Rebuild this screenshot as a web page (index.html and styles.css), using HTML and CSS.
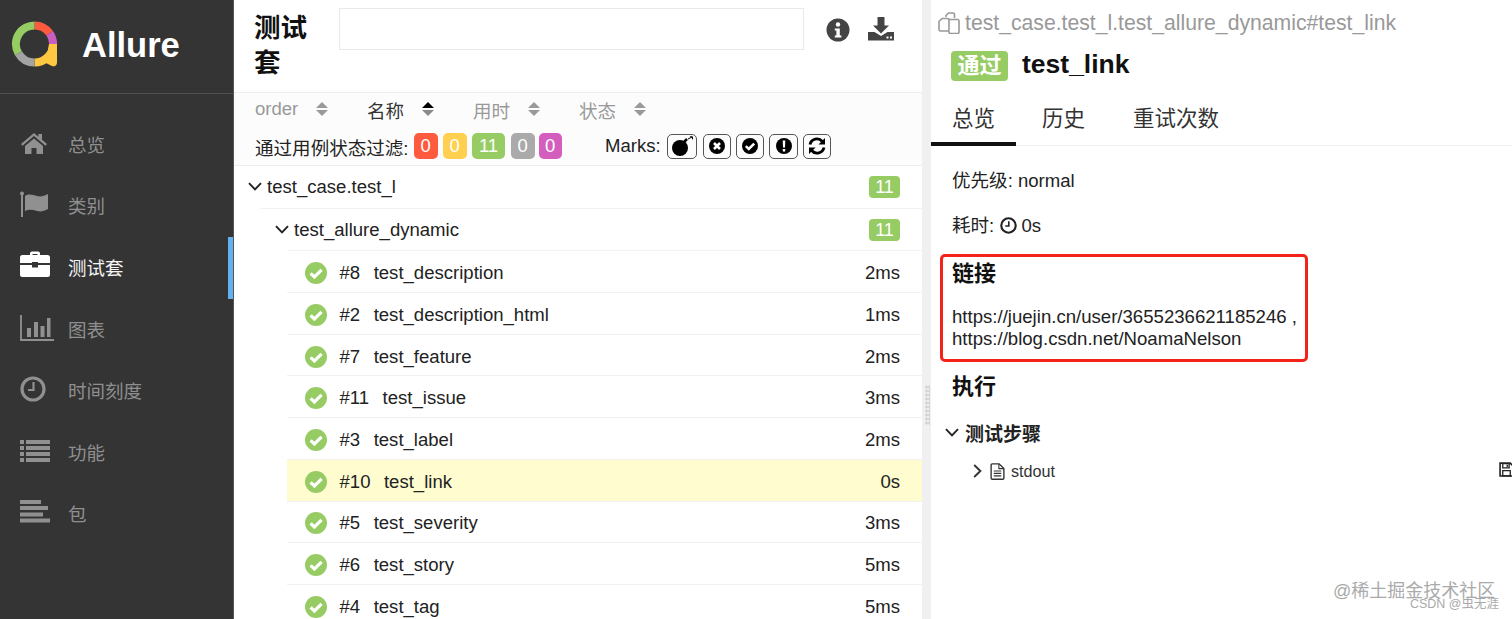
FILE: index.html
```html
<!DOCTYPE html>
<html lang="zh">
<head>
<meta charset="utf-8">
<title>Allure</title>
<link rel="stylesheet" href="styles.css">
</head>
<body>
<svg class="sprite" width="0" height="0" aria-hidden="true">
  <symbol id="chev-down" viewBox="0 0 14 9"><path d="M1 1.2 7 7.4 13 1.2" fill="none" stroke="currentColor" stroke-width="1.9"/></symbol>
  <symbol id="chev-right" viewBox="0 0 9 14"><path d="M1.2 1 7.4 7 1.2 13" fill="none" stroke="currentColor" stroke-width="1.9"/></symbol>
  <symbol id="sort" viewBox="0 0 12 16"><path d="M6 1 12 7H0Z" fill="#9a9a9a"/><path d="M6 15 12 9H0Z" fill="#9a9a9a"/></symbol>
  <symbol id="sort-on" viewBox="0 0 12 16"><path d="M6 1 12 7H0Z" fill="#000"/><path d="M6 15 12 9H0Z" fill="#8a8a8a"/></symbol>
  <symbol id="ok" viewBox="0 0 22 22"><circle cx="11" cy="11" r="11" fill="#97cc64"/><path d="M5.6 11.3 9.4 15 16.6 7.8" fill="none" stroke="#fff" stroke-width="3.2"/></symbol>
</svg>

<div class="app">
  <aside class="side">
    <div class="brand">
      <svg class="logo" width="50" height="50" viewBox="0 0 50 50" aria-hidden="true">
        <g fill="none" stroke-width="8">
          <path d="M24.5 5.4A18.6 18.6 0 0 1 39.7 13.3" stroke="#fd5a3e"/>
          <path d="M39.7 13.3A18.6 18.6 0 0 1 43.1 24" stroke="#c95fc0"/>
          <path d="M43.1 24A18.6 18.6 0 0 1 24.5 42.6" stroke="#ffc843"/>
          <path d="M24.5 42.6A18.6 18.6 0 0 1 8.4 33.3" stroke="#a3a3a3"/>
          <path d="M8.4 33.3A18.6 18.6 0 0 1 24.5 5.4" stroke="#97cc64"/>
        </g>
        <path d="M39 24h8v19a3.6 3.6 0 0 1-4.6 3.2L36 43Z" fill="#ffc843"/>
      </svg>
      <span class="brand-name">Allure</span>
    </div>
    <nav class="nav">
      <a class="nav-item">
        <svg class="nav-icon" width="28" height="24" viewBox="0 0 28 24"><path d="M14 2 1 13l1.5 1.7L14 5l11.5 9.7L27 13l-5-4.2V3h-3.6v2.8Z" fill="currentColor"/><path d="M5 15 14 7.4 23 15v8h-6.5v-6h-5v6H5Z" fill="currentColor"/></svg>
        <span>总览</span>
      </a>
      <a class="nav-item">
        <svg class="nav-icon" width="30" height="26" viewBox="0 0 30 26"><path d="M2 3v24" stroke="currentColor" stroke-width="2" fill="none"/><circle cx="2" cy="2.500" r="2" fill="currentColor"/><path d="M5 5c4-3 8-1 12 0s7 0 11-2v15c-4 2-7 3-11 2s-8-2-12 0Z" fill="currentColor"/></svg>
        <span>类别</span>
      </a>
      <a class="nav-item is-active">
        <svg class="nav-icon" width="30" height="26" viewBox="0 0 30 26"><path d="M10 4V2.500A2 2 0 0 1 12 .5h6a2 2 0 0 1 2 2V4h7.500A2.500 2.500 0 0 1 30 6.500V12H18v-1h-6v1H0V6.500A2.500 2.500 0 0 1 2.500 4ZM12.500 4h5V3h-5Z" fill="currentColor" fill-rule="evenodd"/><path d="M0 14h12v2.500h6V14h12v9.500a2.500 2.500 0 0 1-2.500 2.500h-25A2.500 2.500 0 0 1 0 23.500Z" fill="currentColor"/></svg>
        <span>测试套</span>
      </a>
      <a class="nav-item">
        <svg class="nav-icon" width="34" height="26" viewBox="0 0 34 26"><path d="M1 0v25h33" fill="none" stroke="currentColor" stroke-width="1.800"/><path d="M7 13h4v9H7ZM14 7h4v15h-4ZM20.500 11h4v11h-4ZM27 3h3.500v19H27Z" fill="currentColor"/></svg>
        <span>图表</span>
      </a>
      <a class="nav-item">
        <svg class="nav-icon" width="26" height="26" viewBox="0 0 26 26"><circle cx="13" cy="13" r="11" fill="none" stroke="currentColor" stroke-width="3.200"/><path d="M13.500 6v8H8" fill="none" stroke="currentColor" stroke-width="2.200"/></svg>
        <span>时间刻度</span>
      </a>
      <a class="nav-item">
        <svg class="nav-icon" width="30" height="24" viewBox="0 0 30 24"><path d="M0 1h4v4H0ZM6 1h24v4H6ZM0 7h4v4H0ZM6 7h24v4H6ZM0 13h4v4H0ZM6 13h24v4H6ZM0 19h4v4H0ZM6 19h24v4H6Z" fill="currentColor"/></svg>
        <span>功能</span>
      </a>
      <a class="nav-item">
        <svg class="nav-icon" width="30" height="24" viewBox="0 0 30 24"><path d="M0 0h21v4H0ZM0 6h28v4H0ZM0 12.500h23v4H0ZM0 18.500h30v4H0Z" fill="currentColor"/></svg>
        <span>包</span>
      </a>
    </nav>
  </aside>

  <main class="list">
    <header class="list-head">
      <h2 class="list-title">测试套</h2>
      <div class="search"></div>
      <svg class="tool-info" width="24" height="24" viewBox="0 0 24 24"><circle cx="12" cy="12" r="11.500" fill="#444"/><circle cx="12" cy="6.500" r="2.200" fill="#fff"/><path d="M8.800 10.500h5v7h1.600v2H8.800v-2h1.600v-5H8.800Z" fill="#fff"/></svg>
      <svg class="tool-dl" width="26" height="24" viewBox="0 0 26 24"><path d="M9.500 0h7v8.500h4.500L13 16.500 5 8.500h4.500Z" fill="#444"/><path d="M0 15h6.500l6.500 4 6.500-4H26v8.500H0Z" fill="#444"/><path d="M18.500 19.500h2v2h-2ZM22 19.500h2v2h-2Z" fill="#fff"/></svg>
    </header>
    <div class="controls">
      <div class="sorts">
        <span class="sort s-order">order<svg class="sort-ic" width="12" height="16"><use href="#sort"/></svg></span>
        <span class="sort s-name is-on">名称<svg class="sort-ic" width="12" height="16"><use href="#sort-on"/></svg></span>
        <span class="sort s-time">用时<svg class="sort-ic" width="12" height="16"><use href="#sort"/></svg></span>
        <span class="sort">状态<svg class="sort-ic" width="12" height="16"><use href="#sort"/></svg></span>
      </div>
      <div class="filters">
        <span class="filter-label">通过用例状态过滤:</span>
        <span class="chip c-red">0</span>
        <span class="chip c-yellow">0</span>
        <span class="chip c-green">11</span>
        <span class="chip c-gray">0</span>
        <span class="chip c-purple">0</span>
        <span class="marks-label">Marks:</span>
        <span class="mark m-wide"><svg width="24" height="20" viewBox="0 0 24 20"><circle cx="10" cy="12" r="8" fill="#000"/><path d="M14 6l3-3" stroke="#000" stroke-width="2.500"/><path d="M18 3l4-2M20 .8h2.500v2.500" stroke="#000" fill="none"/></svg></span>
        <span class="mark"><svg width="18" height="18" viewBox="0 0 18 18"><circle cx="9" cy="9" r="8" fill="#000"/><path d="M6 6l6 6M12 6l-6 6" stroke="#fff" stroke-width="2.600"/></svg></span>
        <span class="mark"><svg width="18" height="18" viewBox="0 0 18 18"><circle cx="9" cy="9" r="8" fill="#000"/><path d="M4.800 9.200 7.800 12l5.400-5.400" fill="none" stroke="#fff" stroke-width="2.500"/></svg></span>
        <span class="mark"><svg width="18" height="18" viewBox="0 0 18 18"><circle cx="9" cy="9" r="8" fill="#000"/><path d="M7.700 3.500h2.600L10 10.500H8ZM7.800 12h2.400v2.400H7.800Z" fill="#fff"/></svg></span>
        <span class="mark"><svg width="20" height="18" viewBox="0 0 20 18"><path d="M3 7.500A7 7 0 0 1 15.300 4.500" fill="none" stroke="#000" stroke-width="2.800"/><path d="M18 1v6.500h-6.500Z" fill="#000"/><path d="M17 10.500A7 7 0 0 1 4.700 13.500" fill="none" stroke="#000" stroke-width="2.800"/><path d="M2 17v-6.500h6.500Z" fill="#000"/></svg></span>
      </div>
    </div>
    <div class="tree">
      <div class="group g1">
        <svg class="chev" width="14" height="9"><use href="#chev-down"/></svg>
        <span class="group-name">test_case.test_l</span>
        <span class="count">11</span>
      </div>
      <div class="group g2">
        <svg class="chev" width="14" height="9"><use href="#chev-down"/></svg>
        <span class="group-name">test_allure_dynamic</span>
        <span class="count">11</span>
      </div>
      <div class="row"><svg class="ok" width="22" height="22"><use href="#ok"/></svg><span class="num">#8</span><span class="name">test_description</span><span class="dur">2ms</span></div>
      <div class="row"><svg class="ok" width="22" height="22"><use href="#ok"/></svg><span class="num">#2</span><span class="name">test_description_html</span><span class="dur">1ms</span></div>
      <div class="row"><svg class="ok" width="22" height="22"><use href="#ok"/></svg><span class="num">#7</span><span class="name">test_feature</span><span class="dur">2ms</span></div>
      <div class="row"><svg class="ok" width="22" height="22"><use href="#ok"/></svg><span class="num">#11</span><span class="name">test_issue</span><span class="dur">3ms</span></div>
      <div class="row"><svg class="ok" width="22" height="22"><use href="#ok"/></svg><span class="num">#3</span><span class="name">test_label</span><span class="dur">2ms</span></div>
      <div class="row is-current"><svg class="ok" width="22" height="22"><use href="#ok"/></svg><span class="num">#10</span><span class="name">test_link</span><span class="dur">0s</span></div>
      <div class="row"><svg class="ok" width="22" height="22"><use href="#ok"/></svg><span class="num">#5</span><span class="name">test_severity</span><span class="dur">3ms</span></div>
      <div class="row"><svg class="ok" width="22" height="22"><use href="#ok"/></svg><span class="num">#6</span><span class="name">test_story</span><span class="dur">5ms</span></div>
      <div class="row"><svg class="ok" width="22" height="22"><use href="#ok"/></svg><span class="num">#4</span><span class="name">test_tag</span><span class="dur">5ms</span></div>
    </div>
  </main>

  <div class="split"><span class="grip"></span></div>

  <section class="detail">
    <div class="path">
      <svg width="22" height="22" viewBox="0 0 22 22"><path d="M8 5V3.500L10.500 1H15a1.500 1.500 0 0 1 1.500 1.500V6M1 9.500 4 6.500H9.500A1.500 1.500 0 0 1 11 8V17.500A1.500 1.500 0 0 1 9.500 19h-7A1.500 1.500 0 0 1 1 17.500ZM11 7.500h9A1.200 1.200 0 0 1 21 8.700V20a1.500 1.500 0 0 1-1.500 1.500h-7A1.500 1.500 0 0 1 11 20v-1" fill="none" stroke="#999" stroke-width="1.600"/></svg>
      <span>test_case.test_l.test_allure_dynamic#test_link</span>
    </div>
    <div class="result">
      <span class="status">通过</span>
      <h1 class="result-name">test_link</h1>
    </div>
    <div class="tabs">
      <span class="tab is-on">总览</span>
      <span class="tab t2">历史</span>
      <span class="tab t3">重试次数</span>
    </div>
    <div class="body">
      <p class="meta">优先级: normal</p>
      <p class="meta">耗时: <svg class="clock" width="17" height="17" viewBox="0 0 16 16"><circle cx="8" cy="8" r="6.800" fill="none" stroke="#222" stroke-width="2"/><path d="M8.300 4v4.500H5" fill="none" stroke="#222" stroke-width="1.500"/></svg> 0s</p>
      <div class="links">
        <h3 class="h">链接</h3>
        <p class="link-text">https://juejin.cn/user/3655236621185246 ,<br>https://blog.csdn.net/NoamaNelson</p>
        <span class="redbox"></span>
      </div>
      <h3 class="h exec">执行</h3>
      <div class="steps">
        <svg class="steps-chev" width="14" height="9"><use href="#chev-down"/></svg>
        <span>测试步骤</span>
      </div>
      <div class="step">
        <svg class="step-chev" width="9" height="14"><use href="#chev-right"/></svg>
        <svg class="file" width="15" height="17" viewBox="0 0 14 16"><path d="M1 1.800a1 1 0 0 1 1-1h6.500L13 5.300v9a1 1 0 0 1-1 1H2a1 1 0 0 1-1-1Z" fill="none" stroke="#333" stroke-width="1.300"/><path d="M3.500 7.500h7M3.500 9.800h7M3.500 12.100h7" stroke="#333" stroke-width="1.100"/><path d="M8.300 1v4.300H13" fill="none" stroke="#333"/></svg>
        <span class="step-name">stdout</span>
        <svg class="save" width="15" height="15" viewBox="0 0 14 14"><path d="M1 1h9.500L13 3.500V13H1Z" fill="none" stroke="#222" stroke-width="1.500"/><path d="M3.500 1.500h6v4h-6ZM3.500 8h7v5h-7Z" fill="none" stroke="#222" stroke-width="1.200"/><path d="M7 2.500h1.500v2H7Z" fill="#222"/></svg>
      </div>
    </div>
    <div class="wm">
      <span class="wm-a">@稀土掘金技术社区</span>
      <span class="wm-b">CSDN @虫无涯</span>
    </div>
  </section>
</div>
</body>
</html>
```
FILE: styles.css
```css
* { box-sizing: border-box; }
html, body { margin: 0; height: 100%; overflow: hidden; }
body {
  font-family: "Liberation Sans", "Noto Sans CJK SC", sans-serif;
  font-size: 18.56px;
  color: #222;
  background: #fff;
}
.sprite { position: absolute; }
.app {
  display: grid;
  grid-template-columns: 234px 688px 9px 581px;
  height: 619px;
}

/* sidebar */
.side { background: #343434; border-right: 1px solid #555; color: #999; }
.brand {
  display: flex;
  align-items: center;
  height: 94px;
  padding: 0 0 3px 10px;
  border-bottom: 1px solid #505050;
}
.logo { flex: none; }
.brand-name { margin-left: 22px; font-size: 34.5px; font-weight: 700; color: #fff; }
.nav { padding-top: 20px; display: flex; flex-direction: column; }
.nav-item {
  display: flex;
  align-items: center;
  position: relative;
  height: 61.6px;
  padding: 0 0 2px 68px;
  font-size: 18.5px;
  color: #8f8f8f;
}
.nav-icon { position: absolute; left: 20px; top: calc(50% - 2px); transform: translateY(-50%); color: #909090; }
.nav-item.is-active { color: #f5f5f5; border-right: 5px solid #64b1ef; }
.nav-item.is-active .nav-icon { color: #fff; top: calc(50% - 3.500px); }

/* list pane */
.list { display: flex; flex-direction: column; overflow: hidden; min-width: 0; }
.list-head {
  display: flex;
  align-items: flex-start;
  flex: none;
  height: 93px;
  padding: 8px 0 0 20px;
  border-bottom: 1px solid #eee;
}
.list-title { width: 54px; margin: 3px 0 0; font-size: 26.5px; line-height: 35px; font-weight: 700; color: #111; }
.search { width: 465px; height: 42px; margin-left: 31px; border: 1px solid #e9e9e9; }
.tool-info { margin: 10px 0 0 22px; }
.tool-dl { margin: 9px 0 0 18px; }
.controls { flex: none; height: 73px; background: #fcfcfc; border-bottom: 1px solid #eee; padding-left: 21px; }
.sorts { display: flex; height: 32px; align-items: center; color: #999; }
.sort { display: flex; align-items: center; }
.sort-ic { margin-left: 18px; }
.s-order { width: 112px; }
.s-name { width: 106px; color: #333; }
.s-time { width: 106px; }
.filters { display: flex; align-items: center; height: 26px; margin-top: 8px; }
.filter-label { width: 154px; margin-right: 5px; color: #222; white-space: nowrap; }
.chip {
  display: flex;
  align-items: center;
  justify-content: center;
  height: 26px;
  width: 23.500px;
  margin-right: 5.500px;
  border-radius: 5px;
  color: #fff;
  font-size: 18.5px;
}
.c-red { background: #fd5a3e; }
.c-yellow { background: #ffd050; }
.c-green { background: #97cc64; width: 33px; margin-right: 6px; }
.c-gray { background: #aaa; margin-right: 4px; }
.c-purple { background: #d35ebe; margin-right: 0; }
.marks-label { margin: 0 6px 0 43px; }
.mark {
  display: flex;
  align-items: center;
  justify-content: center;
  width: 28.400px;
  height: 25px;
  margin-right: 5px;
  border: 1px solid #555;
  border-radius: 5px;
}
.mark.m-wide { width: 30px; margin-right: 6px; }
.tree { flex: 1; overflow: hidden; }
.group, .row { display: flex; align-items: center; padding-right: 22px; border-bottom: 1px solid #f2f2f2; }
.group { height: 42.7px; }
.row { height: 41.7px; }
.g1 { margin-left: 26px; }
.g2 { margin-left: 53px; }
.chev { flex: none; margin: 0 5px 0 -12px; color: #222; }
.group-name { flex: 1; }
.count { width: 31px; height: 22px; border-radius: 4px; background: #97cc64; color: #fff; font-size: 18px; line-height: 22px; text-align: center; }
.row { margin-left: 53px; padding-top: 3px; padding-left: 18px; }
.ok { flex: none; margin-right: 12.500px; }
.num { margin-right: 13.500px; }
.name { flex: 1; }
.dur { text-align: right; }
.is-current { background: #fffdd0; }

/* splitter */
.split { background: #f0f0f0; position: relative; }
.grip {
  position: absolute;
  left: 3px;
  top: 385px;
  width: 5px;
  height: 40px;
  background-image: radial-gradient(#d6d6d6 1.100px, transparent 1.300px);
  background-size: 3px 4px;
}

/* detail pane */
.detail { position: relative; overflow: hidden; min-width: 0; }
.path { display: flex; align-items: center; gap: 5px; height: 30px; margin: 8px 0 0 7px; color: #999; font-size: 21.200px; white-space: nowrap; }
.result { display: flex; align-items: center; height: 42px; margin: 6px 0 0 20px; }
.status { width: 57px; height: 30px; margin-top: 1px; border-radius: 4px; background: #97cc64; color: #fff; font-weight: 700; font-size: 22px; line-height: 30px; text-align: center; }
.result-name { margin: -1px 0 0 14px; font-size: 26.5px; font-weight: 700; color: #111; }
.tabs { display: flex; height: 55px; margin-top: 5px; border-bottom: 1px solid #eee; }
.tab { display: flex; align-items: center; padding: 0 21px 4px; height: 55px; font-size: 21.5px; color: #333; }
.tab.is-on { width: 85px; border-bottom: 4px solid #111; padding-bottom: 0; }
.t2 { padding-left: 26px; padding-right: 26px; }
.t3 { padding-left: 22px; }
.body { padding-left: 21px; }
.meta { margin: 24px 0 0; line-height: 21px; color: #222; }
.clock { vertical-align: -2px; margin: 0 -1px 0 1px; }
.links { position: relative; margin-top: 21px; }
.h { margin: 0; font-size: 22px; line-height: 34px; font-weight: 700; color: #111; }
.link-text { margin: 15px 0 0; line-height: 21.500px; white-space: nowrap; font-size: 18.6px; }
.redbox {
  position: absolute;
  left: -12px;
  top: -3px;
  width: 368px;
  height: 108px;
  border: 3.500px solid #f4231a;
  border-radius: 5px;
}
.exec { margin-top: 21px; }
.steps { display: flex; align-items: center; gap: 6px; margin: 13px 0 0 -7px; font-size: 19px; font-weight: 700; color: #222; height: 30px; }
.step { display: flex; align-items: center; height: 30px; margin: 9px 0 0 21px; font-size: 16.200px; color: #333; }
.file { margin-left: 8px; }
.step-name { flex: 1; margin-left: 6px; }
.save { flex: none; margin-right: -2px; margin-top: -3px; }
.wm { position: absolute; left: 402px; top: 578px; display: flex; flex-direction: column; align-items: flex-end; width: 166px; }
.wm-a { font-size: 18px; line-height: 26px; color: #aaa; white-space: nowrap; width: 100%; }
.wm-b { font-size: 12.500px; line-height: 15px; margin-top: -7px; color: #aaa; white-space: nowrap; }
```
